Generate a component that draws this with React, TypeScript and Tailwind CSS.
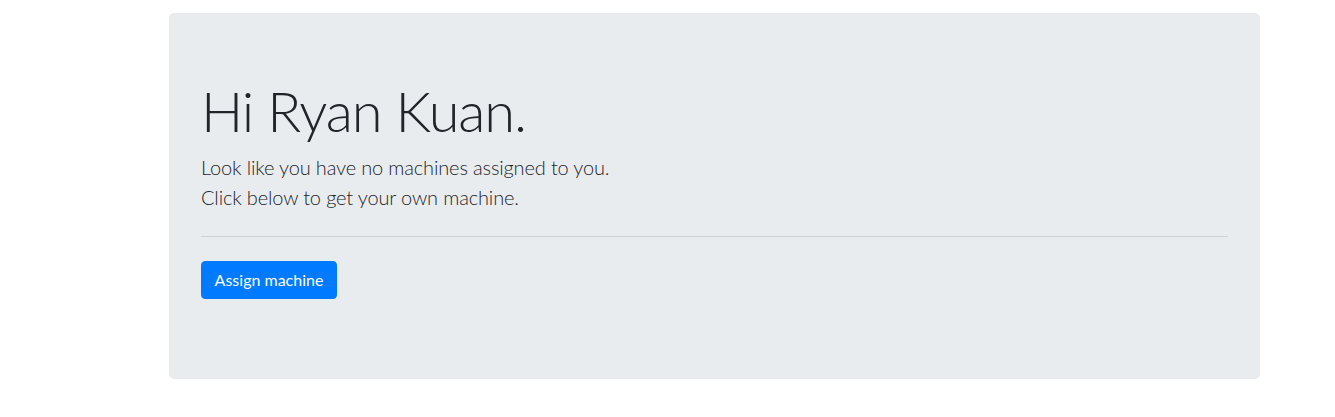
import React from "react";

// --- Components ---

const Jumbotron = ({ name }: { name: string }) => {
  return (
    <div className="bg-[#e9ecef] rounded-[5px] px-8 py-16">
      {/* Greeting */}
      <h1 className="text-[56px] leading-[1.2] font-light tracking-[-1.1px] mb-2">
        Hi {name}.
      </h1>
      <p className="text-[20px] leading-[30px] font-light tracking-[-0.15px]">
        Look like you have no machines assigned to you.
        <br />
        Click below to get your own machine.
      </p>

      <hr className="my-6 border-t border-black/10" />

      {/* Action */}
      <p className="mb-4">
        <button className="bg-[#007bff] text-white text-base leading-6 w-[136px] py-1.5 rounded-[4px] border border-[#007bff]">
          Assign machine
        </button>
      </p>
    </div>
  );
};

export default function App() {
  return (
    <div
      className="min-h-screen bg-white text-[#212529] pt-[13px] pl-[169px] pr-[75px]"
      style={{ fontFamily: "Lato, 'Open Sans', sans-serif" }}
    >
      <Jumbotron name="Ryan Kuan" />
    </div>
  );
}
